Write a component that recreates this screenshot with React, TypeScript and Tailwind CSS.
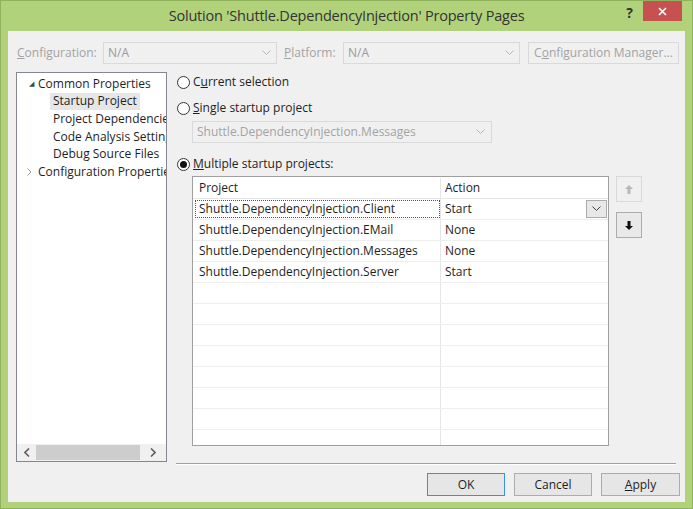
const rows = [
  { project: "Shuttle.DependencyInjection.Client", action: "Start" },
  { project: "Shuttle.DependencyInjection.EMail", action: "None" },
  { project: "Shuttle.DependencyInjection.Messages", action: "None" },
  { project: "Shuttle.DependencyInjection.Server", action: "Start" },
];

function Chevron({ className = "" }: { className?: string }) {
  return (
    <svg width="9" height="6" viewBox="0 0 9 6" className={className}>
      <path d="M0.5 0.5 L4.5 4.5 L8.5 0.5" fill="none" stroke="currentColor" strokeWidth="1" />
    </svg>
  );
}

function Radio({ checked }: { checked?: boolean }) {
  return (
    <span className="w-[13px] h-[13px] rounded-full border border-[#333] bg-white flex items-center justify-center shrink-0">
      {checked && <span className="w-[7px] h-[7px] rounded-full bg-[#111]" />}
    </span>
  );
}

export default function App() {
  const emptyRows = Array.from({ length: 8 });

  return (
    <div className="w-[693px] h-[509px] bg-[#b1d27b] border border-[#8fb35c] flex flex-col font-['Open_Sans','Noto_Sans',sans-serif] text-[12px] text-[#1e1e1e] overflow-hidden">
      {/* title bar */}
      <div className="h-[30px] shrink-0 flex items-start relative">
        <div className="flex-1 text-center text-[14.5px] text-[#333] pt-[4px] tracking-[-0.2px]">
          Solution 'Shuttle.DependencyInjection' Property Pages
        </div>
        <div className="absolute right-[10px] top-0 flex items-start">
          <span className="text-[14px] font-bold text-[#333] mr-[10px] mt-[1px]">?</span>
          <span className="w-[39px] h-[20px] bg-[#c75050] text-white flex items-center justify-center">
            <svg width="9" height="9" viewBox="0 0 9 9">
              <path d="M1 1 L8 8 M8 1 L1 8" stroke="white" strokeWidth="1.6" />
            </svg>
          </span>
        </div>
      </div>

      <div className="mx-[7px] mb-[6px] flex-1 bg-[#f0f0f0] flex flex-col">
        {/* top row */}
        <div className="flex items-center mt-[11px] h-[22px] shrink-0 text-[#a3a3a3]">
          <span className="ml-[9px] w-[86px]">
            <span className="underline">C</span>onfiguration:
          </span>
          <div className="w-[174px] h-[22px] border border-[#d9d9d9] flex items-center justify-between pl-[4px] pr-[5px] text-[#9a9a9a]">
            <span>N/A</span>
            <Chevron className="text-[#b5b5b5]" />
          </div>
          <span className="ml-[7px] w-[59px]">
            <span className="underline">P</span>latform:
          </span>
          <div className="w-[177px] h-[22px] border border-[#d9d9d9] flex items-center justify-between pl-[4px] pr-[5px] text-[#9a9a9a]">
            <span>N/A</span>
            <Chevron className="text-[#b5b5b5]" />
          </div>
          <div className="ml-[8px] w-[151px] h-[22px] border border-[#d9d9d9] flex items-center justify-center text-[#a3a3a3]">
            C<span className="underline">o</span>nfiguration Manager...
          </div>
        </div>

        <div className="flex mt-[8px] shrink-0">
          {/* tree */}
          <div className="ml-[8px] w-[151px] h-[390px] bg-white border border-[#828790] flex flex-col">
            <div className="flex-1 pt-[2px] overflow-hidden whitespace-nowrap">
              <div className="h-[17.6px] flex items-center">
                <span className="ml-[12px] w-[9px] shrink-0 text-[7px] text-[#444]">◢</span>
                <span>Common Properties</span>
              </div>
              <div className="h-[17.6px] flex items-center">
                <span className="ml-[33px] px-[3px] h-[17px] flex items-center bg-[#e6e6e6]">Startup Project</span>
              </div>
              <div className="h-[17.6px] flex items-center pl-[36px]">Project Dependencies</div>
              <div className="h-[17.6px] flex items-center pl-[36px]">Code Analysis Settings</div>
              <div className="h-[17.6px] flex items-center pl-[36px]">Debug Source Files</div>
              <div className="h-[17.6px] flex items-center">
                <span className="ml-[10px] w-[11px] shrink-0 flex items-center">
                  <svg width="5" height="8" viewBox="0 0 5 8">
                    <path d="M0.5 0.5 L4 4 L0.5 7.5" fill="none" stroke="#9a9a9a" />
                  </svg>
                </span>
                <span>Configuration Properties</span>
              </div>
            </div>
            <div className="h-[17px] flex items-center bg-[#f0f0f0]">
              <span className="w-[19px] flex justify-center">
                <svg width="6" height="9" viewBox="0 0 6 9">
                  <path d="M5 0.5 L1 4.5 L5 8.5" fill="none" stroke="#606060" strokeWidth="1.6" />
                </svg>
              </span>
              <div className="w-[104px] h-[15px] bg-[#cdcdcd]" />
              <span className="flex-1 flex justify-center">
                <svg width="6" height="9" viewBox="0 0 6 9">
                  <path d="M1 0.5 L5 4.5 L1 8.5" fill="none" stroke="#606060" strokeWidth="1.6" />
                </svg>
              </span>
            </div>
          </div>

          {/* right side */}
          <div className="ml-[10px] flex flex-col">
            <div className="flex items-center gap-[3px] mt-[3px] h-[14px]">
              <Radio />
              <span>
                C<span className="underline">u</span>rrent selection
              </span>
            </div>
            <div className="flex items-center gap-[3px] mt-[12px] h-[14px]">
              <Radio />
              <span>
                <span className="underline">S</span>ingle startup project
              </span>
            </div>
            <div className="ml-[15px] mt-[6px] w-[300px] h-[22px] border border-[#d9d9d9] flex items-center justify-between pl-[4px] pr-[6px] text-[#a3a3a3]">
              <span>Shuttle.DependencyInjection.Messages</span>
              <Chevron className="text-[#b5b5b5]" />
            </div>
            <div className="flex items-center gap-[3px] mt-[14px] h-[14px]">
              <Radio checked />
              <span>
                <span className="underline">M</span>ultiple startup projects:
              </span>
            </div>

            <div className="flex mt-[5px]">
              {/* grid */}
              <div className="ml-[15px] w-[417px] h-[270px] bg-white border border-[#a0a0a0] flex flex-col overflow-hidden">
                <div className="h-[22px] pt-[1px] flex border-b border-[#e5e5e5] shrink-0">
                  <div className="w-[248px] border-r border-[#e5e5e5] pl-[6px] flex items-center">Project</div>
                  <div className="flex-1 pl-[4px] flex items-center">Action</div>
                </div>
                {rows.map((r, i) => (
                  <div key={r.project} className="h-[21px] flex border-b border-[#eeeeee] shrink-0">
                    <div className="w-[248px] border-r border-[#e5e5e5] pl-[2px] py-[1px] flex">
                      <div
                        className={`flex-1 flex items-center pl-[3px] ${i === 0 ? "border border-dotted border-[#555]" : "border border-transparent"}`}
                      >
                        {r.project}
                      </div>
                    </div>
                    <div className="flex-1 pl-[4px] flex items-center justify-between">
                      <span>{r.action}</span>
                      {i === 0 && (
                        <span className="mr-[1px] w-[21px] h-[18px] bg-[#e8e8e8] border border-[#acacac] flex items-center justify-center">
                          <Chevron className="text-[#404040]" />
                        </span>
                      )}
                    </div>
                  </div>
                ))}
                {emptyRows.map((_, i) => (
                  <div key={i} className="h-[21px] flex border-b border-[#eeeeee] shrink-0">
                    <div className="w-[248px] border-r border-[#e5e5e5]" />
                    <div className="flex-1" />
                  </div>
                ))}
                <div className="flex-1 flex">
                  <div className="w-[248px] border-r border-[#e5e5e5]" />
                </div>
              </div>

              {/* move buttons */}
              <div className="ml-[7px] flex flex-col gap-[10px]">
                <div className="w-[26px] h-[26px] border border-[#d9d9d9] flex items-center justify-center">
                  <svg width="8" height="9" viewBox="0 0 8 9">
                    <path d="M4 0 L8 4 L5.5 4 L5.5 9 L2.5 9 L2.5 4 L0 4 Z" fill="#b8b8b8" />
                  </svg>
                </div>
                <div className="w-[26px] h-[26px] border border-[#acacac] bg-[#e9e9e9] flex items-center justify-center">
                  <svg width="8" height="9" viewBox="0 0 8 9">
                    <path d="M4 9 L8 5 L5.5 5 L5.5 0 L2.5 0 L2.5 5 L0 5 Z" fill="#111" />
                  </svg>
                </div>
              </div>
            </div>
          </div>
        </div>

        {/* separator */}
        <div className="ml-[168px] mr-[9px] mt-[1px] h-[2px] shrink-0 border-t border-[#a0a0a0] border-b border-b-white" />

        {/* buttons */}
        <div className="flex justify-end gap-[9px] mr-[5px] mt-[8px] shrink-0">
          <div className="w-[78px] h-[23px] border border-[#3c8ede] bg-[#e6e6e6] flex items-center justify-center">OK</div>
          <div className="w-[78px] h-[23px] border border-[#acacac] bg-[#e6e6e6] flex items-center justify-center">Cancel</div>
          <div className="w-[79px] h-[23px] border border-[#acacac] bg-[#e6e6e6] flex items-center justify-center">
            <span>
              <span className="underline">A</span>pply
            </span>
          </div>
        </div>
      </div>
    </div>
  );
}
